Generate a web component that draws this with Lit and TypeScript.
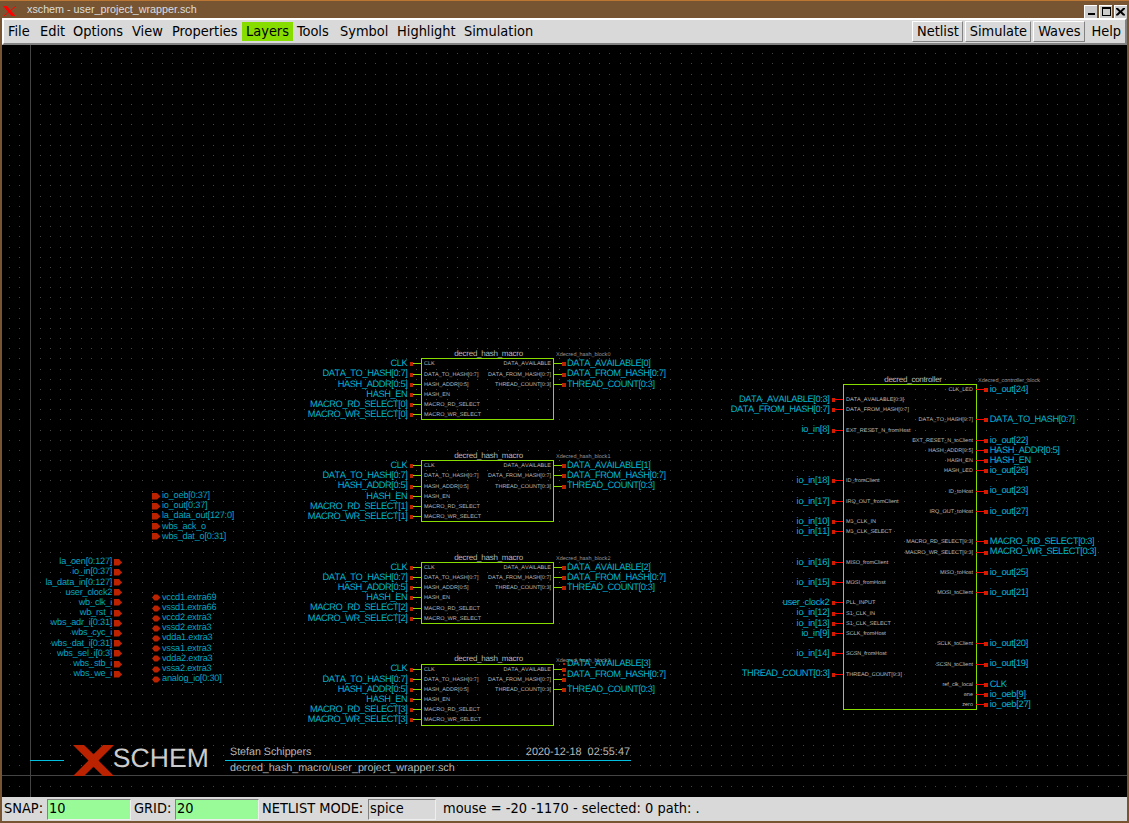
import { LitElement, html, svg, css } from "lit";
import { customElement } from "lit/decorators.js";

const STEP = 10.1707;
const gx = (n: number) => Math.floor(30.16 + STEP * n);
const gy = (n: number) => Math.floor(775.9 - STEP * n);
// Baseline of a label that belongs to grid row n.
const base = (n: number, shift: number) => Math.floor(775.9 - STEP * n + shift);

const gridPath = (): string => {
  let d = "";
  for (let j = -1; j <= 71; j++) {
    if (j === 0) continue;
    for (let i = -2; i <= 107; i++) {
      if (i !== 0) d += `M${gx(i)} ${gy(j)}h1v1h-1z`;
    }
  }
  return d;
};

type Pin = [number, string, string];

const ctrlLeft: Pin[] = [
  [37, "DATA_AVAILABLE[0:3]", "DATA_AVAILABLE[0:3]"],
  [36, "DATA_FROM_HASH[0:7]", "DATA_FROM_HASH[0:7]"],
  [34, "io_in[8]", "EXT_RESET_N_fromHost"],
  [29, "io_in[18]", "ID_fromClient"],
  [27, "io_in[17]", "IRQ_OUT_fromClient"],
  [25, "io_in[10]", "M1_CLK_IN"],
  [24, "io_in[11]", "M1_CLK_SELECT"],
  [21, "io_in[16]", "MISO_fromClient"],
  [19, "io_in[15]", "MOSI_fromHost"],
  [17, "user_clock2", "PLL_INPUT"],
  [16, "io_in[12]", "S1_CLK_IN"],
  [15, "io_in[13]", "S1_CLK_SELECT"],
  [14, "io_in[9]", "SCLK_fromHost"],
  [12, "io_in[14]", "SCSN_fromHost"],
  [10, "THREAD_COUNT[0:3]", "THREAD_COUNT[0:3]"],
];
const ctrlRight: Pin[] = [
  [38, "io_out[24]", "CLK_LED"],
  [35, "DATA_TO_HASH[0:7]", "DATA_TO_HASH[0:7]"],
  [33, "io_out[22]", "EXT_RESET_N_toClient"],
  [32, "HASH_ADDR[0:5]", "HASH_ADDR[0:5]"],
  [31, "HASH_EN", "HASH_EN"],
  [30, "io_out[26]", "HASH_LED"],
  [28, "io_out[23]", "ID_toHost"],
  [26, "io_out[27]", "IRQ_OUT_toHost"],
  [23, "MACRO_RD_SELECT[0:3]", "MACRO_RD_SELECT[0:3]"],
  [22, "MACRO_WR_SELECT[0:3]", "MACRO_WR_SELECT[0:3]"],
  [20, "io_out[25]", "MISO_toHost"],
  [18, "io_out[21]", "MOSI_toClient"],
  [13, "io_out[20]", "SCLK_toClient"],
  [11, "io_out[19]", "SCSN_toClient"],
  [9, "CLK", "ref_clk_local"],
  [8, "io_oeb[9]", "one"],
  [7, "io_oeb[27]", "zero"],
];
const inPins = ["la_oen[0:127]", "io_in[0:37]", "la_data_in[0:127]", "user_clock2", "wb_clk_i", "wb_rst_i",
  "wbs_adr_i[0:31]", "wbs_cyc_i", "wbs_dat_i[0:31]", "wbs_sel_i[0:3]", "wbs_stb_i", "wbs_we_i"];
const outPins = ["io_oeb[0:37]", "io_out[0:37]", "la_data_out[127:0]", "wbs_ack_o", "wbs_dat_o[0:31]"];
const powerPins = ["vccd1.extra69", "vssd1.extra66", "vccd2.extra3", "vssd2.extra3", "vdda1.extra3",
  "vssa1.extra3", "vdda2.extra3", "vssa2.extra3", "analog_io[0:30]"];

const netClass = (net: string) => (/^[a-z]/.test(net) ? "net low" : "net");

const leftPin = (x: number, m: number, net: string, name: string, stub: string) => {
  const y = gy(m);
  return svg`
  <rect class=${stub === "red" ? "hot" : "pad"} x=${x - 1} y=${y - 1} width="3" height="4"/>
  <rect class=${stub} x=${x + 2} y=${y} width="8" height="1"/>
  <text class="${netClass(net)} end" x=${x - 3.6} y=${base(m, 2.8)}>${net}</text>
  <text class="port" x=${x + 13} y=${y + 2}>${name}</text>`;
};

const rightPin = (x: number, m: number, net: string, name: string, stub: string, netY?: number) => {
  const y = gy(m);
  return svg`
  <rect class=${stub} x=${x - 10} y=${y} width="8" height="1"/>
  <rect class=${stub === "red" ? "hot" : "pad"} x=${x - 2} y=${y - 1} width="4" height="4"/>
  ${netY ? svg`<rect class="pad" x=${x - 1} y=${netY} width="2" height="2"/>` : null}
  <text class=${netClass(net)} x=${x + (stub === "red" ? 3.8 : 3)} y=${netY ? netY + 3 : base(m, 2.8)}>${net}</text>
  <text class="port end" x=${x - 13} y=${y + 2}>${name}</text>`;
};

const hashBlock = (k: number) => {
  const top = 41 - 10 * k;
  const x = gx(38.5), x2 = gx(51.5), y = gy(top), y2 = gy(top - 6);
  const lx = gx(37.5), rx = gx(52.5);
  const row = (r: number) => top - 0.5 - r;
  const left = [["CLK", "CLK"], ["DATA_TO_HASH[0:7]", "DATA_TO_HASH[0:7]"], ["HASH_ADDR[0:5]", "HASH_ADDR[0:5]"], ["HASH_EN", "HASH_EN"],
    [`MACRO_RD_SELECT[${k}]`, "MACRO_RD_SELECT"], [`MACRO_WR_SELECT[${k}]`, "MACRO_WR_SELECT"]];
  const last = k === 3;
  return svg`
    <rect class="box" x=${x + 0.5} y=${y + 0.5} width=${x2 - x} height=${y2 - y}/>
    <text class="title" x="488.5" y=${y - (last ? 3 : 2.4)}>decred_hash_macro</text>
    <text class="inst" x="556" y=${y - 2.5}>Xdecred_hash_block${k}</text>
    ${left.map(([n, p], i) => leftPin(lx, row(i), n, p, "green"))}
    ${rightPin(rx, row(0), `DATA_AVAILABLE[${k}]`, "DATA_AVAILABLE", "green", last ? 663 : undefined)}
    ${rightPin(rx, row(1), "DATA_FROM_HASH[0:7]", "DATA_FROM_HASH[0:7]", "green", last ? 674 : undefined)}
    ${rightPin(rx, row(2), "THREAD_COUNT[0:3]", "THREAD_COUNT[0:3]", "green")}`;
};

@customElement("xs-canvas")
export class XsCanvas extends LitElement {
  static styles = css`
    :host { display: block; background: #000; overflow: hidden; }
    svg { display: block; }
    text { font-family: "Liberation Sans", Arial, sans-serif; fill: #b8b8b8; text-rendering: geometricPrecision; font-kerning: none; white-space: pre; }
    .dots { fill: #464646; }
    .axis { fill: #444; }
    .cyan { fill: #00bfdf; }
    .green { fill: #88dd00; }
    .red { fill: #ff0000; }
    .pad { fill: #bb2200; }
    .hot { fill: #d41c00; }
    .box { fill: none; stroke: #88dd00; stroke-width: 1; }
    .net { fill: #00b4d2; font-size: 9.3px; letter-spacing: -0.41px; }
    .low { letter-spacing: -0.26px; }
    .list { fill: #00a5c0; font-size: 9.2px; letter-spacing: -0.22px; }
    .port { font-size: 5.5px; }
    .inst { font-size: 5.5px; fill: #999; }
    .title { font-size: 8px; letter-spacing: -0.25px; text-anchor: middle; }
    .end { text-anchor: end; }
    .foot { font-size: 10.7px; }
    .path { font-size: 10.75px; }
    .date { font-size: 10.9px; }
    .logo { font-size: 26.6px; fill: #ccc; }
  `;
  render() {
    return html`<svg width="1125" height="752" viewBox="2 45 1125 752">
      <path class="dots" shape-rendering="crispEdges" d=${gridPath()} />
      <rect class="axis" x="30" y="45" width="1" height="752" />
      <rect class="axis" x="2" y="775" width="1125" height="1" />
      ${[0, 1, 2, 3].map(hashBlock)}
      <rect class="box" x="843.5" y="384.5" width="133" height="325" />
      <text class="title" x="913" y="382">decred_controller</text>
      <text class="inst" x="978" y="382">Xdecred_controller_block</text>
      ${ctrlLeft.map(([m, n, p]) => leftPin(gx(79), m, n, p, "red"))}
      ${ctrlRight.map(([m, n, p]) => rightPin(gx(94), m, n, p, "red"))}
      ${inPins.map((t, i) => {
        const y = gy(21 - i);
        return svg`<path class="pad" d="M114 ${y - 3}h5l3 3.500l-3 3h-5z"/><text class="list end" x="112.2" y=${base(21 - i, 2.4)}>${t}</text>`;
      })}
      ${outPins.map((t, i) => {
        const y = gy(27.5 - i);
        return svg`<path class="pad" d="M152 ${y - 3}h5l3.500 3.500l-3.500 3h-5z"/><text class="list" x="162" y=${base(27.5 - i, 2.4)}>${t}</text>`;
      })}
      ${powerPins.map((t, i) => {
        const y = gy(17.5 - i) + 0.5;
        return svg`<path class="pad" d="M152 ${y}l2.500 -3h3l3 3l-3 3h-3z"/><text class="list" x="162" y=${base(17.5 - i, 2.4)}>${t}</text>`;
      })}
      <rect class="cyan" x="30" y="760" width="34" height="1" />
      <rect class="cyan" x="225" y="760" width="406" height="1" />
      <path class="pad" d="M73 745h11l9.500 9.300l9.500-9.300h11l-15.500 15.500l15.500 15.500h-11l-9.500-9.300l-9.500 9.300h-11l15.500-15.500z" />
      <text class="logo" x="112.8" y="767">SCHEM</text>
      <text class="foot" x="230" y="755">Stefan Schippers</text>
      <text class="date end" x="630" y="755" xml:space="preserve">2020-12-18  02:55:47</text>
      <text class="path" x="230" y="771">decred_hash_macro/user_project_wrapper.sch</text>
    </svg>`;
  }
}

// Label and entry width in pixels.
const menus: [string, number][] = [
  ["File", 32], ["Edit", 33], ["Options", 59], ["View", 40], ["Properties", 74],
  ["Layers", 51], ["Tools", 43], ["Symbol", 57], ["Highlight", 67], ["Simulation", 78],
];
const actions: [string, number][] = [["Netlist", 51], ["Simulate", 66], ["Waves", 52]];
const controls = [
  "M3 7h7v2h-7z",
  "M2 1h9v9h-9zM3 3v6h7v-6z",
  "M1 2h2l2.500 2.500l2.500-2.500h2v1l-3 2.700l3 2.700v1h-2l-2.500-2.500l-2.500 2.500h-2v-1l3-2.700l-3-2.700z",
];

@customElement("app-root")
export class AppRoot extends LitElement {
  static styles = css`
    :host { display: block; }
    * { box-sizing: border-box; }
    .window { width: 1129px; height: 823px; padding: 0 2px 2px; background: #775533; border-top: 1px solid #bb7733;
      display: flex; flex-direction: column; font: 14.45px/16px "DejaVu Sans Condensed", "DejaVu Sans", sans-serif; font-stretch: condensed;
      color: #000; white-space: pre; overflow: hidden; }
    .titlebar { height: 17px; display: flex; align-items: flex-start; flex: none; }
    .icon { flex: none; margin: 5px 0 0 1px; }
    .title { flex: 1; margin: 1px 0 0 10px; font: 10.75px/15px "Liberation Sans", sans-serif; color: #ddd; }
    .wbtn { flex: none; width: 13px; height: 13px; margin: 4px 0 0 2px; background: #ccc; border: solid #fff; border-width: 1px 0 0 1px; display: block; }
    .menubar { height: 27px; flex: none; display: flex; align-items: center; background: #d9d9d9;
      border-style: solid; border-width: 2px; border-color: #fff #828282 #828282 #fff; }
    .item { flex: none; padding: 0 3px 0 4px; height: 19px; line-height: 18px; }
    .help { padding-right: 4px; }
    .on { background: #88dd00; }
    .gap { flex: 1; }
    .btn { flex: none; height: 21px; line-height: 18px; margin-right: 2px; text-align: center; border: 1px solid; border-color: #fff #828282 #828282 #fff; }
    .canvas { flex: none; height: 752px; }
    .status { height: 24px; flex: none; display: flex; align-items: center; background: #d9d9d9; padding-left: 2px; }
    .status span { line-height: 20px; }
    .status .label { height: 22px; }
    .status .snap { width: 39px; }
    .status .grid { width: 37px; }
    .status .netlist { width: 102px; }
    .status .field { flex: none; width: 84px; height: 21px; margin: 0 3px 0 4px; padding-left: 1px; background: #98fb98; border: 1px solid; border-color: #828282 #eee #eee #828282; line-height: 17px; }
    .status .mode { width: 68px; background: #d9d9d9; margin-right: 7px; }
  `;
  render() {
    return html`<div class="window"><div class="titlebar"><svg class="icon" width="14" height="10" viewBox="0 0 14 10"><path fill="#f00" d="M0 0h4l8.500 10h-4z"/><path stroke="#f00" fill="none" d="M13 .2L1 9.800"/></svg><span class="title">xschem - user_project_wrapper.sch</span>${controls.map(
        (d) => html`<svg class="wbtn" viewBox="0 0 12 12"><path d=${d} fill-rule="evenodd"/></svg>`)}</div><div class="menubar">${menus.map(
      ([m, w]) => html`<span class="item ${m === "Layers" ? "on" : ""}" style="width:${w}px">${m}</span>`)}<span class="gap"></span>${actions.map(
      ([m, w]) => html`<span class="btn" style="width:${w}px">${m}</span>`)}<span class="item help">Help</span></div><xs-canvas class="canvas"></xs-canvas><div class="status"><span class="label snap">SNAP:</span><span class="field">10</span><span class="label grid">GRID:</span><span class="field">20</span><span class="label netlist">NETLIST MODE:</span><span class="field mode">spice</span><span class="label">mouse = -20 -1170 - selected: 0 path: .</span></div></div>`;
  }
}
